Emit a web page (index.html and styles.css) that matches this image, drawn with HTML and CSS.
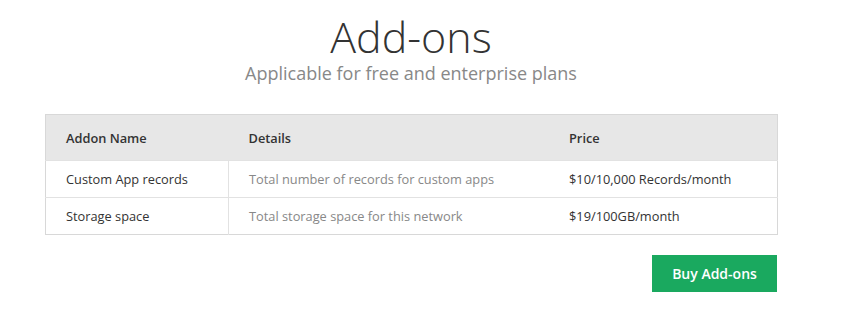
FILE: index.html
```html
<!DOCTYPE html>
<html>
<head>
<meta charset="utf-8">
<link rel="stylesheet" href="styles.css">
</head>
<body>
<div class="page">
  <header class="head">
    <h1 class="title">Add-ons</h1>
    <p class="subtitle">Applicable for free and enterprise plans</p>
  </header>
  <table class="addons">
    <thead>
      <tr>
        <th class="c-name">Addon Name</th>
        <th class="c-details">Details</th>
        <th class="c-price">Price</th>
      </tr>
    </thead>
    <tbody>
      <tr>
        <td class="c-name">Custom App records</td>
        <td class="c-details muted">Total number of records for custom apps</td>
        <td class="c-price">$10/10,000 Records/month</td>
      </tr>
      <tr>
        <td class="c-name">Storage space</td>
        <td class="c-details muted">Total storage space for this network</td>
        <td class="c-price">$19/100GB/month</td>
      </tr>
    </tbody>
  </table>
  <div class="actions">
    <button class="buy">Buy Add-ons</button>
  </div>
</div>
</body>
</html>
```
FILE: styles.css
```css
html, body {
  margin: 0;
  padding: 0;
  background: #fff;
}
body {
  font-family: "Open Sans", "Noto Sans", sans-serif;
  color: #333;
}
.page {
  width: 732px;
  margin-left: 45px;
}
.head {
  text-align: center;
  padding-top: 13px;
}
.title {
  margin: 0;
  font-size: 43px;
  font-weight: 300;
  line-height: 48px;
  color: #333;
}
.subtitle {
  margin: 0;
  font-size: 18px;
  line-height: 24px;
  color: #888;
}
.addons {
  width: 733px;
  margin-top: 29px;
  border-collapse: collapse;
  border: 1px solid #d8d8d8;
  font-size: 12.8px;
}
.addons th {
  background: #e7e7e7;
  font-weight: 600;
  text-align: left;
  height: 45px;
  padding: 0 0 0 20px;
  color: #333;
}
.addons td {
  height: 36px;
  padding: 0 0 0 20px;
  border-top: 1px solid #e2e2e2;
}
.addons td.c-details {
  border-left: 1px solid #e2e2e2;
}
.c-name { width: 162px; }
.c-details { width: 300px; }
.muted { color: #888; }
.actions {
  display: flex;
  justify-content: flex-end;
  margin-top: 20px;
}
.buy {
  width: 125px;
  height: 37px;
  border: none;
  background: #1aa95f;
  color: #fff;
  font-family: "Open Sans", "Noto Sans", sans-serif;
  font-size: 14px;
  font-weight: 600;
  padding: 0;
}
```
